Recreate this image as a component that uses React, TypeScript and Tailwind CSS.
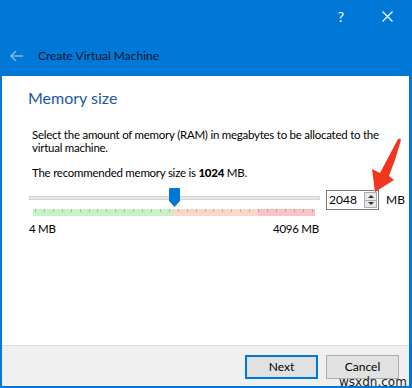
import React from 'react';

const font = { fontFamily: 'Lato, "Noto Sans", sans-serif' };

function SpinBox() {
  return (
    <div className="flex items-center h-[20px] w-[53px] border border-[#7a7a7a] bg-white">
      <span className="pl-[2px] text-[12px] leading-none text-black flex-1">2048</span>
      <div className="flex flex-col h-[16px] w-[13px] mr-[1px] border border-[#adadad] bg-[#e8e8e8]">
        <div className="flex-1 flex items-center justify-center border-b border-[#adadad]">
          <div className="w-0 h-0 border-l-[3px] border-r-[3px] border-b-[3px] border-l-transparent border-r-transparent border-b-[#333]" />
        </div>
        <div className="flex-1 flex items-center justify-center">
          <div className="w-0 h-0 border-l-[3px] border-r-[3px] border-t-[3px] border-l-transparent border-r-transparent border-t-[#333]" />
        </div>
      </div>
    </div>
  );
}

function Ticks() {
  return (
    <div className="absolute inset-x-[2px] top-0 flex justify-between">
      {Array.from({ length: 32 }).map((_, i) => (
        <div key={i} className="w-px h-[3px] bg-black/20" />
      ))}
    </div>
  );
}

export default function App() {
  return (
    <div style={font} className="relative w-[412px] h-[388px] bg-[#0078d7] flex flex-col pl-[2px] pr-[3px] pb-[2px] overflow-hidden">
      {/* title bar */}
      <div className="h-[32px] flex justify-end items-center text-white">
        <div className="w-[46px] flex justify-center text-[14px]">?</div>
        <div className="w-[46px] flex justify-center mr-[-1px]">
          <svg width="11" height="11" viewBox="0 0 11 11">
            <path d="M0.5 0.5 L10.5 10.5 M10.5 0.5 L0.5 10.5" stroke="white" strokeWidth="1.2" />
          </svg>
        </div>
      </div>
      {/* wizard header */}
      <div className="h-[44px] flex items-center pt-[3px]">
        <svg className="ml-[8px]" width="14" height="12" viewBox="0 0 14 12">
          <path d="M6 1 L1 6 L6 11 M1 6 L13 6" stroke="#7fb1e3" strokeWidth="1.6" fill="none" />
        </svg>
        <span className="ml-[14px] text-[12px] text-[#06142b]">Create Virtual Machine</span>
      </div>
      {/* content */}
      <div className="flex-1 bg-white flex flex-col pl-[26px] pt-[11px]">
        <div className="text-[16px] leading-[22px] text-[#1d56a6]">Memory size</div>
        <div className="pl-[4px] mt-[19px] text-[11.5px] tracking-[-0.25px] leading-[13px] text-black whitespace-nowrap">
          <p>
            Select the amount of memory (RAM) in megabytes to be allocated to the
            <br />
            virtual machine.
          </p>
          <p className="mt-[12px]">
            The recommended memory size is <b className="font-black">1024</b> MB.
          </p>
        </div>
        <div className="flex items-start mt-[14px]">
          <div className="relative w-[292px] pl-px">
            <div className="h-[4px] mt-[3px] bg-[#e6e6e6] border border-[#d4d4d4]" />
            <div className="relative flex h-[7px] mt-[9px] mx-[4px] w-[282px]">
              <div className="w-[140px] bg-[#c9f2c9]" />
              <div className="w-[85px] bg-[#fcd8cc]" />
              <div className="flex-1 bg-[#f9c3c8]" />
              <Ticks />
            </div>
            {/* thumb */}
            <div className="absolute left-[141px] top-[-5px] w-[11px] h-[19px]">
              <svg width="11" height="19" viewBox="0 0 11 19">
                <path d="M0 1 Q0 0 1 0 L10 0 Q11 0 11 1 L11 13 L5.5 19 L0 13 Z" fill="#0078d7" />
              </svg>
            </div>
            <div className="flex justify-between mt-[6px] text-[11.5px] tracking-[-0.25px] leading-[14px] text-black pr-px">
              <span>4 MB</span>
              <span>4096 MB</span>
            </div>
          </div>
          <div className="ml-[6px] mt-[-3px] flex items-center">
            <SpinBox />
            <span className="ml-[7px] text-[12px] text-black">MB</span>
          </div>
        </div>
      </div>
      {/* footer */}
      <div className="h-[41px] bg-[#f0f0f0] border-t border-[#dfdfdf] flex justify-end items-center gap-[8px] pr-[10px] pt-[2px]">
        <button className="w-[73px] h-[24px] bg-[#e1e1e1] border-2 border-[#0078d7] text-[12px] text-black">Next</button>
        <button className="w-[73px] h-[24px] bg-[#e1e1e1] border border-[#adadad] text-[12px] text-black">Cancel</button>
      </div>
      {/* red annotation arrow */}
      <svg className="absolute left-[360px] top-[135px]" width="46" height="62" viewBox="0 0 46 62">
        <path d="M38 4 Q40 3 41 5 Q36 24 29 41 L34 45 L15 57 L12 34 L20 38 Q29 21 38 4 Z" fill="#f0361e" />
      </svg>
      {/* watermark */}
      <div className="absolute left-[339px] top-[376px] text-[12px] leading-[12px] text-[#222]" style={{ fontFamily: '"DejaVu Sans", sans-serif' }}>
        wsxdn.com
      </div>
    </div>
  );
}
